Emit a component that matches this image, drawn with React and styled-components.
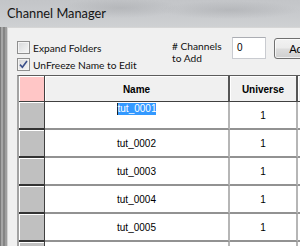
import React from "react";
import styled, { createGlobalStyle } from "styled-components";

const GlobalStyle = createGlobalStyle`
  html, body { margin: 0; padding: 0; overflow: hidden; background: #f0f0f0; }
  #root { width: 300px; height: 246px; }
`;

const Window = styled.div`
  width: 300px;
  height: 246px;
  display: flex;
  flex-direction: column;
  overflow: hidden;
`;

const TitleBar = styled.div`
  height: 27px;
  flex-shrink: 0;
  display: flex;
  align-items: center;
  padding-left: 7px;
  padding-bottom: 1px;
  box-sizing: border-box;
  font-family: Lato, "Open Sans", sans-serif;
  font-size: 12.8px;
  color: #141414;
  background:
    radial-gradient(ellipse 60px 10px at 120px 8px, rgba(150,152,156,0.35), transparent),
    radial-gradient(ellipse 70px 9px at 230px 10px, rgba(150,152,156,0.35), transparent),
    linear-gradient(to bottom, #c3c5c8, #c9cbce 60%, #cfd1d3);
`;

const Body = styled.div`
  flex: 1;
  display: flex;
  min-height: 0;
`;

const LeftFrame = styled.div`
  width: 8px;
  flex-shrink: 0;
  background: linear-gradient(to right,
    #7c7c7c 0 1px, #a6a6a6 1px 3px, #858585 3px 5px, #9e9e9e 5px 7px, #d2d2d2 7px 8px);
`;

const Content = styled.div`
  flex: 1;
  min-width: 0;
  background: #f0f0f0;
  border-top: 1px solid #d6d6d6;
  padding-left: 9px;
  display: flex;
  flex-direction: column;
`;

const Controls = styled.div`
  height: 47px;
  flex-shrink: 0;
  display: flex;
  align-items: flex-start;
  font-family: Lato, "Open Sans", sans-serif;
  font-size: 10.2px;
  color: #111;
  & > * { flex-shrink: 0; }
`;

const CheckColumn = styled.div`
  width: 155px;
  display: flex;
  flex-direction: column;
  gap: 4px;
  padding-top: 13px;
`;

const CheckRow = styled.label`
  display: flex;
  align-items: center;
  gap: 3px;
  height: 13px;
`;

const Box = styled.span`
  width: 13px;
  height: 13px;
  box-sizing: border-box;
  border: 1px solid #8f8f8f;
  background: linear-gradient(135deg, #d6d7d9, #f7f7f7);
  box-shadow: inset 0 0 0 1px #f4f4f4;
  display: flex;
  align-items: center;
  justify-content: center;
`;

const ChannelsLabel = styled.div`
  width: 60px;
  padding-top: 12px;
  line-height: 12px;
`;

const NumInput = styled.div`
  width: 34px;
  height: 22px;
  margin-top: 9px;
  box-sizing: border-box;
  background: #fff;
  border: 1px solid #c9cbd0;
  border-top-color: #abadb3;
  padding: 4px 0 0 4px;
  font-family: "Liberation Sans", Arial, sans-serif;
  font-size: 10px;
  color: #000;
`;

const AddButton = styled.div`
  width: 50px;
  height: 21px;
  margin-top: 10px;
  margin-left: 8px;
  box-sizing: border-box;
  border: 1px solid #707070;
  border-radius: 3px;
  background: linear-gradient(to bottom, #f2f2f2 0%, #ebebeb 48%, #dddddd 52%, #cfcfcf 100%);
  box-shadow: inset 0 0 0 1px rgba(255,255,255,0.7);
  display: flex;
  align-items: center;
  justify-content: center;
  font-family: Lato, "Open Sans", sans-serif;
  font-size: 11px;
  color: #000;
`;

const Grid = styled.div`
  display: grid;
  grid-template-columns: 26px 185px 68px 60px;
  grid-template-rows: 26px;
  grid-auto-rows: 28px;
  width: max-content;
  border-left: 2px solid #a3a3a3;
  border-top: 1px solid #5c5c5c;
  box-shadow: inset 1px 0 #6a6a6a;
  font-family: "Liberation Sans", Arial, sans-serif;
  font-size: 10px;
  color: #000;
`;

const Corner = styled.div`
  background: #ffc6c6;
  border-right: 1px solid #404040;
  border-bottom: 1px solid #404040;
  box-shadow: inset 1px 1px #fff;
`;

const HeadCell = styled.div`
  background: #f0f0f0;
  border-right: 2px solid #555;
  border-bottom: 1px solid #404040;
  box-shadow: inset 1px 1px #fff;
  display: flex;
  align-items: center;
  justify-content: center;
  font-weight: bold;
  padding-top: 1px;
`;

const RowHead = styled.div`
  background: #c0c0c0;
  border-right: 1px solid #404040;
  border-bottom: 2px solid #333;
  box-shadow: inset 1px 1px #fff;
`;

const Cell = styled.div`
  background: #fff;
  border-right: 2px solid #b6b6b6;
  border-bottom: 2px solid #929292;
  display: flex;
  justify-content: center;
  align-items: ${(p) => (p.$editing ? "flex-start" : "center")};
  padding-top: ${(p) => (p.$editing ? "1px" : "0")};
`;

const Selected = styled.span`
  background: #3399ff;
  color: #fff;
  padding: 1px 0;
  line-height: 10px;
  border-left: 1px solid #222;
`;

const CheckMark = () => (
  <svg width="9" height="9" viewBox="0 0 9 9">
    <path d="M1 4.6 L3.4 7.2 L8 1" fill="none" stroke="#3a4f8a" strokeWidth="1.6" />
  </svg>
);

const rows = [
  { name: "tut_0001", universe: "1" },
  { name: "tut_0002", universe: "1" },
  { name: "tut_0003", universe: "1" },
  { name: "tut_0004", universe: "1" },
  { name: "tut_0005", universe: "1" },
  { name: "", universe: "" },
];

export default function App() {
  return (
    <>
      <GlobalStyle />
      <Window>
        <TitleBar>Channel Manager</TitleBar>
        <Body>
          <LeftFrame />
          <Content>
            <Controls>
              <CheckColumn>
                <CheckRow>
                  <Box />
                  Expand Folders
                </CheckRow>
                <CheckRow>
                  <Box>
                    <CheckMark />
                  </Box>
                  UnFreeze Name to Edit
                </CheckRow>
              </CheckColumn>
              <ChannelsLabel>
                # Channels
                <br />
                to Add
              </ChannelsLabel>
              <NumInput>0</NumInput>
              <AddButton>Add</AddButton>
            </Controls>
            <Grid>
              <Corner />
              <HeadCell>Name</HeadCell>
              <HeadCell>Universe</HeadCell>
              <HeadCell />
              {rows.map((r, i) => (
                <React.Fragment key={i}>
                  <RowHead />
                  <Cell $editing={i === 0}>
                    {i === 0 ? <Selected>{r.name}</Selected> : r.name}
                  </Cell>
                  <Cell>{r.universe}</Cell>
                  <Cell />
                </React.Fragment>
              ))}
            </Grid>
          </Content>
        </Body>
      </Window>
    </>
  );
}
